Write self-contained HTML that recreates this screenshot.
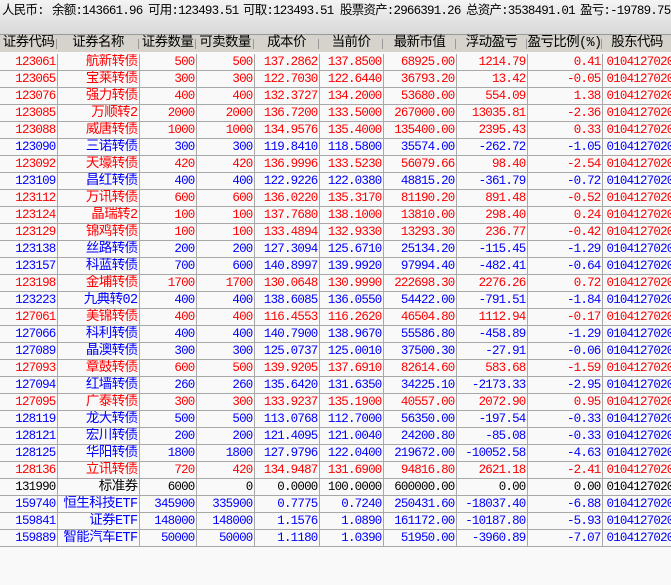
<!DOCTYPE html>
<html><head><meta charset="utf-8"><style>
html,body{margin:0;padding:0;width:671px;height:585px;overflow:hidden;background:#f9f9f9;font-family:"Liberation Mono","Noto Sans CJK SC",monospace;font-size:12.5px;letter-spacing:-0.8px}
#top{position:absolute;left:0;top:0;width:671px;height:34px;background:linear-gradient(#f4f4f4,#d8d8d8);border-bottom:1px solid #9a9a9a}
#top span{position:absolute;top:3px;white-space:nowrap;color:#000;line-height:17px}
#hdr{position:absolute;left:0;top:35px;width:700px;height:17px;background:#d6d3cc;font-size:13.5px;letter-spacing:-0.6px}
#hdr div{position:absolute;top:0;height:17px;line-height:17px;text-align:center;white-space:nowrap;color:#000}
#hdr i{position:absolute;top:4px;width:1px;height:10px;background:#999}
table{position:absolute;left:0;top:54px;border-collapse:collapse;table-layout:fixed;width:715px}
td{height:16px;line-height:16px;padding:0 1px 0 0;border-right:1px solid #a8a8a8;border-bottom:1px solid #a8a8a8;text-align:right;white-space:nowrap;overflow:hidden}
td:nth-child(2){font-size:13.5px;letter-spacing:-0.6px;height:15px;line-height:15px;padding-top:1px}
td:last-child{text-align:left;padding-left:4px}
.r td{color:#ff0000}.b td{color:#0000ff}.k td{color:#000}
</style></head><body>
<div id="top">
<span style="left:2px">人民币:</span>
<span style="left:52px">余额:143661.96</span>
<span style="left:148px">可用:123493.51</span>
<span style="left:243px">可取:123493.51</span>
<span style="left:340px">股票资产:2966391.26</span>
<span style="left:466px">总资产:3538491.01</span>
<span style="left:580px">盈亏:-19789.75</span>
</div>
<div id="hdr">
<div style="left:0;width:57px">证券代码</div><i style="left:56px"></i>
<div style="left:57px;width:82px">证券名称</div><i style="left:138px"></i>
<div style="left:139px;width:57px">证券数量</div><i style="left:195px"></i>
<div style="left:196px;width:58px">可卖数量</div><i style="left:253px"></i>
<div style="left:254px;width:65px">成本价</div><i style="left:318px"></i>
<div style="left:319px;width:64px">当前价</div><i style="left:382px"></i>
<div style="left:383px;width:73px">最新市值</div><i style="left:455px"></i>
<div style="left:456px;width:71px">浮动盈亏</div><i style="left:526px"></i>
<div style="left:527px;width:75px">盈亏比例(%)</div><i style="left:601px"></i>
<div style="left:602px;width:70px">股东代码</div>
</div>
<table>
<colgroup><col style="width:57px"><col style="width:82px"><col style="width:57px"><col style="width:58px"><col style="width:65px"><col style="width:64px"><col style="width:73px"><col style="width:71px"><col style="width:75px"><col style="width:113px"></colgroup>
<tr class="r"><td>123061</td><td>航新转债</td><td>500</td><td>500</td><td>137.2862</td><td>137.8500</td><td>68925.00</td><td>1214.79</td><td>0.41</td><td>0104127020</td></tr>
<tr class="r"><td>123065</td><td>宝莱转债</td><td>300</td><td>300</td><td>122.7030</td><td>122.6440</td><td>36793.20</td><td>13.42</td><td>-0.05</td><td>0104127020</td></tr>
<tr class="r"><td>123076</td><td>强力转债</td><td>400</td><td>400</td><td>132.3727</td><td>134.2000</td><td>53680.00</td><td>554.09</td><td>1.38</td><td>0104127020</td></tr>
<tr class="r"><td>123085</td><td>万顺转2</td><td>2000</td><td>2000</td><td>136.7200</td><td>133.5000</td><td>267000.00</td><td>13035.81</td><td>-2.36</td><td>0104127020</td></tr>
<tr class="r"><td>123088</td><td>威唐转债</td><td>1000</td><td>1000</td><td>134.9576</td><td>135.4000</td><td>135400.00</td><td>2395.43</td><td>0.33</td><td>0104127020</td></tr>
<tr class="b"><td>123090</td><td>三诺转债</td><td>300</td><td>300</td><td>119.8410</td><td>118.5800</td><td>35574.00</td><td>-262.72</td><td>-1.05</td><td>0104127020</td></tr>
<tr class="r"><td>123092</td><td>天壕转债</td><td>420</td><td>420</td><td>136.9996</td><td>133.5230</td><td>56079.66</td><td>98.40</td><td>-2.54</td><td>0104127020</td></tr>
<tr class="b"><td>123109</td><td>昌红转债</td><td>400</td><td>400</td><td>122.9226</td><td>122.0380</td><td>48815.20</td><td>-361.79</td><td>-0.72</td><td>0104127020</td></tr>
<tr class="r"><td>123112</td><td>万讯转债</td><td>600</td><td>600</td><td>136.0220</td><td>135.3170</td><td>81190.20</td><td>891.48</td><td>-0.52</td><td>0104127020</td></tr>
<tr class="r"><td>123124</td><td>晶瑞转2</td><td>100</td><td>100</td><td>137.7680</td><td>138.1000</td><td>13810.00</td><td>298.40</td><td>0.24</td><td>0104127020</td></tr>
<tr class="r"><td>123129</td><td>锦鸡转债</td><td>100</td><td>100</td><td>133.4894</td><td>132.9330</td><td>13293.30</td><td>236.77</td><td>-0.42</td><td>0104127020</td></tr>
<tr class="b"><td>123138</td><td>丝路转债</td><td>200</td><td>200</td><td>127.3094</td><td>125.6710</td><td>25134.20</td><td>-115.45</td><td>-1.29</td><td>0104127020</td></tr>
<tr class="b"><td>123157</td><td>科蓝转债</td><td>700</td><td>600</td><td>140.8997</td><td>139.9920</td><td>97994.40</td><td>-482.41</td><td>-0.64</td><td>0104127020</td></tr>
<tr class="r"><td>123198</td><td>金埔转债</td><td>1700</td><td>1700</td><td>130.0648</td><td>130.9990</td><td>222698.30</td><td>2276.26</td><td>0.72</td><td>0104127020</td></tr>
<tr class="b"><td>123223</td><td>九典转02</td><td>400</td><td>400</td><td>138.6085</td><td>136.0550</td><td>54422.00</td><td>-791.51</td><td>-1.84</td><td>0104127020</td></tr>
<tr class="r"><td>127061</td><td>美锦转债</td><td>400</td><td>400</td><td>116.4553</td><td>116.2620</td><td>46504.80</td><td>1112.94</td><td>-0.17</td><td>0104127020</td></tr>
<tr class="b"><td>127066</td><td>科利转债</td><td>400</td><td>400</td><td>140.7900</td><td>138.9670</td><td>55586.80</td><td>-458.89</td><td>-1.29</td><td>0104127020</td></tr>
<tr class="b"><td>127089</td><td>晶澳转债</td><td>300</td><td>300</td><td>125.0737</td><td>125.0010</td><td>37500.30</td><td>-27.91</td><td>-0.06</td><td>0104127020</td></tr>
<tr class="r"><td>127093</td><td>章鼓转债</td><td>600</td><td>500</td><td>139.9205</td><td>137.6910</td><td>82614.60</td><td>583.68</td><td>-1.59</td><td>0104127020</td></tr>
<tr class="b"><td>127094</td><td>红墙转债</td><td>260</td><td>260</td><td>135.6420</td><td>131.6350</td><td>34225.10</td><td>-2173.33</td><td>-2.95</td><td>0104127020</td></tr>
<tr class="r"><td>127095</td><td>广泰转债</td><td>300</td><td>300</td><td>133.9237</td><td>135.1900</td><td>40557.00</td><td>2072.90</td><td>0.95</td><td>0104127020</td></tr>
<tr class="b"><td>128119</td><td>龙大转债</td><td>500</td><td>500</td><td>113.0768</td><td>112.7000</td><td>56350.00</td><td>-197.54</td><td>-0.33</td><td>0104127020</td></tr>
<tr class="b"><td>128121</td><td>宏川转债</td><td>200</td><td>200</td><td>121.4095</td><td>121.0040</td><td>24200.80</td><td>-85.08</td><td>-0.33</td><td>0104127020</td></tr>
<tr class="b"><td>128125</td><td>华阳转债</td><td>1800</td><td>1800</td><td>127.9796</td><td>122.0400</td><td>219672.00</td><td>-10052.58</td><td>-4.63</td><td>0104127020</td></tr>
<tr class="r"><td>128136</td><td>立讯转债</td><td>720</td><td>420</td><td>134.9487</td><td>131.6900</td><td>94816.80</td><td>2621.18</td><td>-2.41</td><td>0104127020</td></tr>
<tr class="k"><td>131990</td><td>标准券</td><td>6000</td><td>0</td><td>0.0000</td><td>100.0000</td><td>600000.00</td><td>0.00</td><td>0.00</td><td>0104127020</td></tr>
<tr class="b"><td>159740</td><td>恒生科技ETF</td><td>345900</td><td>335900</td><td>0.7775</td><td>0.7240</td><td>250431.60</td><td>-18037.40</td><td>-6.88</td><td>0104127020</td></tr>
<tr class="b"><td>159841</td><td>证券ETF</td><td>148000</td><td>148000</td><td>1.1576</td><td>1.0890</td><td>161172.00</td><td>-10187.80</td><td>-5.93</td><td>0104127020</td></tr>
<tr class="b"><td>159889</td><td>智能汽车ETF</td><td>50000</td><td>50000</td><td>1.1180</td><td>1.0390</td><td>51950.00</td><td>-3960.89</td><td>-7.07</td><td>0104127020</td></tr>
</table>
</body></html>
